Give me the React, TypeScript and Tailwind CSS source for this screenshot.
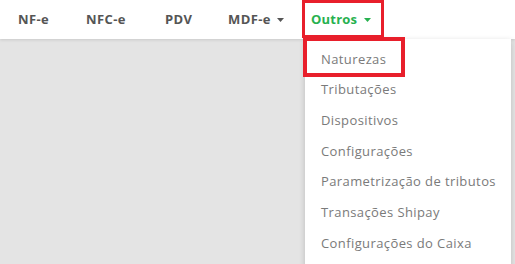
const navItems = [
  { label: 'NF-e', width: 'w-[68px]' },
  { label: 'NFC-e', width: 'w-[79px]' },
  { label: 'PDV', width: 'w-[63px]' },
  { label: 'MDF-e', width: 'w-[83px]', caret: true },
]

const menuItems = [
  'Naturezas',
  'Tributações',
  'Dispositivos',
  'Configurações',
  'Parametrização de tributos',
  'Transações Shipay',
  'Configurações do Caixa',
]

function Caret({ className }: { className: string }) {
  return (
    <svg width="7" height="4" viewBox="0 0 7 4" className={className}>
      <path d="M0 0h7L3.5 4z" fill="currentColor" />
    </svg>
  )
}

export default function App() {
  return (
    <div
      className="relative w-[515px] h-[264px] overflow-hidden bg-[#e4e4e4]"
      style={{ fontFamily: '"Open Sans", sans-serif' }}
    >
      <nav className="relative z-10 h-[39px] bg-white shadow-[0_1px_3px_rgba(0,0,0,0.12)] flex items-center pl-[18px]">
        {navItems.map((item) => (
          <div key={item.label} className={`${item.width} flex items-center gap-[6px]`}>
            <span className="text-[13px] font-bold text-[#555555] tracking-[0.4px]">{item.label}</span>
            {item.caret && <Caret className="text-[#555555]" />}
          </div>
        ))}
        <div className="flex items-center gap-[7px]">
          <span className="text-[13px] font-bold text-[#27b14f] tracking-[0.2px]">Outros</span>
          <Caret className="text-[#27b14f]" />
        </div>
      </nav>

      {/* dropdown */}
      <div className="absolute z-20 left-[305px] top-[39px] w-[206px] h-[230px] bg-white rounded-b-[3px] shadow-[0_2px_6px_rgba(0,0,0,0.18)] pt-[5px]">
        {menuItems.map((label) => (
          <div key={label} className="h-[30.7px] flex items-center pl-[16px] text-[13px] text-[#7a7a7a] tracking-[0.4px]">
            {label}
          </div>
        ))}
      </div>

      {/* highlight boxes */}
      <div className="absolute z-30 left-[302px] top-[0px] w-[82px] h-[38px] border-[3px] border-[#e81f2b]" />
      <div className="absolute z-30 left-[303px] top-[37px] w-[102px] h-[40px] border-[4px] border-[#e81f2b]" />
    </div>
  )
}
